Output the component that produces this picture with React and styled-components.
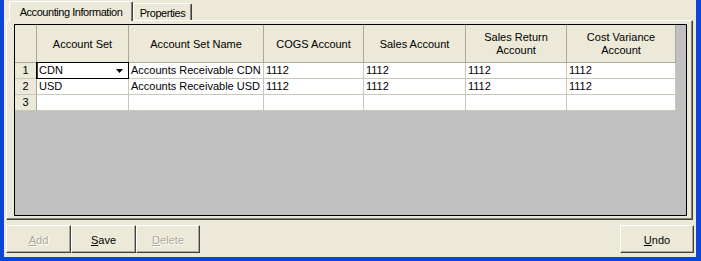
import { Fragment } from "react";
import styled, { createGlobalStyle } from "styled-components";

const FONT = `"Liberation Sans", Arial, sans-serif`;
const BEIGE = "#ECE9D8";
const GRID_LINE = "#C9C7BA";
const HEAD_LINE = "#ACA899";

const COLUMNS = [
  { key: "set", title: "Account Set", width: 92 },
  { key: "name", title: "Account Set Name", width: 135 },
  { key: "cogs", title: "COGS Account", width: 100 },
  { key: "sales", title: "Sales Account", width: 102 },
  { key: "ret", title: ["Sales Return", "Account"], width: 101 },
  { key: "var", title: ["Cost Variance", "Account"], width: 109 },
];

const ROWS = [
  { set: "CDN", name: "Accounts Receivable CDN", cogs: "1112", sales: "1112", ret: "1112", var: "1112" },
  { set: "USD", name: "Accounts Receivable USD", cogs: "1112", sales: "1112", ret: "1112", var: "1112" },
  {},
];

const Global = createGlobalStyle`
  html, body {
    margin: 0;
    padding: 0;
    background: ${BEIGE};
  }
  * { box-sizing: border-box; }
`;

const Window = styled.div`
  width: 701px;
  height: 261px;
  background: ${BEIGE};
  border-left: 4px solid #0A45D8;
  border-right: 5px solid #0A45D8;
  border-bottom: 4px solid #0A45D8;
  display: flex;
  flex-direction: column;
  font-family: ${FONT};
  font-size: 11px;
  color: #000;
  overflow: hidden;
`;

const Body = styled.div`
  padding: 0 3px 0 2px;
  display: flex;
  flex-direction: column;
`;

const TabStrip = styled.div`
  display: flex;
  align-items: flex-end;
  height: 20px;
  padding-left: 3px;
  position: relative;
  z-index: 1;
`;

const Tab = styled.div`
  height: ${({ $active }) => ($active ? "20px" : "17px")};
  margin-bottom: ${({ $active }) => ($active ? "-1px" : "0")};
  width: ${({ $w }) => $w}px;
  background: ${BEIGE};
  border-top: 1px solid #fff;
  border-left: 1px solid #fff;
  border-right: 1px solid #404040;
  box-shadow: inset -1px 0 0 #808080;
  border-radius: 2px 2px 0 0;
  display: flex;
  align-items: center;
  justify-content: center;
  padding-top: ${({ $active }) => ($active ? "0" : "1px")};
  letter-spacing: -0.45px;
  white-space: nowrap;
`;

const Panel = styled.div`
  width: 687px;
  height: 200px;
  border-top: 1px solid #fff;
  border-left: 1px solid #fff;
  border-right: 1px solid #404040;
  border-bottom: 1px solid #404040;
  box-shadow: inset -1px -1px 0 #808080;
  padding: 3px 5px 3px 7px;
`;

const Grid = styled.div`
  width: 673px;
  height: 192px;
  border: 1px solid #000;
  background: #C0C0C0;
  display: grid;
  grid-template-columns: 22px ${COLUMNS.map((c) => c.width + "px").join(" ")};
  grid-auto-rows: 16px;
  grid-template-rows: 38px;
  align-content: start;
  justify-content: start;
`;

const HeadCell = styled.div`
  background: ${BEIGE};
  border-right: 1px solid ${HEAD_LINE};
  border-bottom: 1px solid ${HEAD_LINE};
  display: flex;
  flex-direction: column;
  align-items: center;
  justify-content: center;
  text-align: center;
  line-height: 13px;
  padding-top: 1px;
`;

const RowNum = styled.div`
  background: ${BEIGE};
  border-right: 1px solid ${HEAD_LINE};
  border-bottom: 1px solid ${GRID_LINE};
  display: flex;
  align-items: center;
  justify-content: center;
  line-height: 15px;
`;

const Cell = styled.div`
  position: relative;
  background: #fff;
  border-right: 1px solid ${GRID_LINE};
  border-bottom: 1px solid ${GRID_LINE};
  padding-left: 2px;
  line-height: 15px;
  white-space: nowrap;
`;

const Editor = styled.div`
  position: absolute;
  left: -1px;
  top: -1px;
  right: -1px;
  bottom: -1px;
  border: 1px solid #000;
  box-shadow: inset 1px 0 0 #404040;
  display: flex;
  align-items: center;
  justify-content: space-between;
  padding: 0 5px 0 2px;
  background: #fff;
  z-index: 1;
`;

const Footer = styled.div`
  display: flex;
  justify-content: space-between;
  padding: 5px 2px 0 2px;
`;

const ButtonGroup = styled.div`
  display: flex;
`;

const Button = styled.div`
  width: ${({ $w }) => $w}px;
  height: 28px;
  background: ${BEIGE};
  border: 1px solid;
  border-color: #fff #404040 #404040 #fff;
  box-shadow: inset -1px -1px 0 #ACA899;
  display: flex;
  align-items: center;
  justify-content: center;
  color: ${({ $disabled }) => ($disabled ? "#ACA899" : "#000")};
  text-shadow: ${({ $disabled }) => ($disabled ? "1px 1px 0 #fff" : "none")};
  padding-top: 1px;

  u {
    text-decoration: underline;
    text-underline-offset: 1px;
  }
`;

function Arrow() {
  return (
    <svg width="7" height="4" viewBox="0 0 7 4">
      <path d="M0 0h7L3.5 4z" fill="#000" />
    </svg>
  );
}

function Label({ text }) {
  return (
    <>
      <u>{text[0]}</u>
      {text.slice(1)}
    </>
  );
}

export default function App() {
  return (
    <>
      <Global />
      <Window>
        <Body>
          <TabStrip>
            <Tab $active $w={124}>Accounting Information</Tab>
            <Tab $w={59}>Properties</Tab>
          </TabStrip>
          <Panel>
            <Grid>
              <HeadCell />
              {COLUMNS.map((c) => (
                <HeadCell key={c.key}>
                  {Array.isArray(c.title)
                    ? c.title.map((t) => <span key={t}>{t}</span>)
                    : c.title}
                </HeadCell>
              ))}
              {ROWS.map((row, i) => (
                <Fragment key={i}>
                  <RowNum>{i + 1}</RowNum>
                  {COLUMNS.map((c) => (
                    <Cell key={c.key}>
                      {i === 0 && c.key === "set" ? (
                        <Editor>
                          <span>{row[c.key]}</span>
                          <Arrow />
                        </Editor>
                      ) : (
                        row[c.key] || ""
                      )}
                    </Cell>
                  ))}
                </Fragment>
              ))}
            </Grid>
          </Panel>
        </Body>
        <Footer>
          <ButtonGroup>
            <Button $w={65} $disabled>
              <Label text="Add" />
            </Button>
            <Button $w={65}>
              <Label text="Save" />
            </Button>
            <Button $w={64} $disabled>
              <Label text="Delete" />
            </Button>
          </ButtonGroup>
          <Button $w={74}>
            <Label text="Undo" />
          </Button>
        </Footer>
      </Window>
    </>
  );
}
